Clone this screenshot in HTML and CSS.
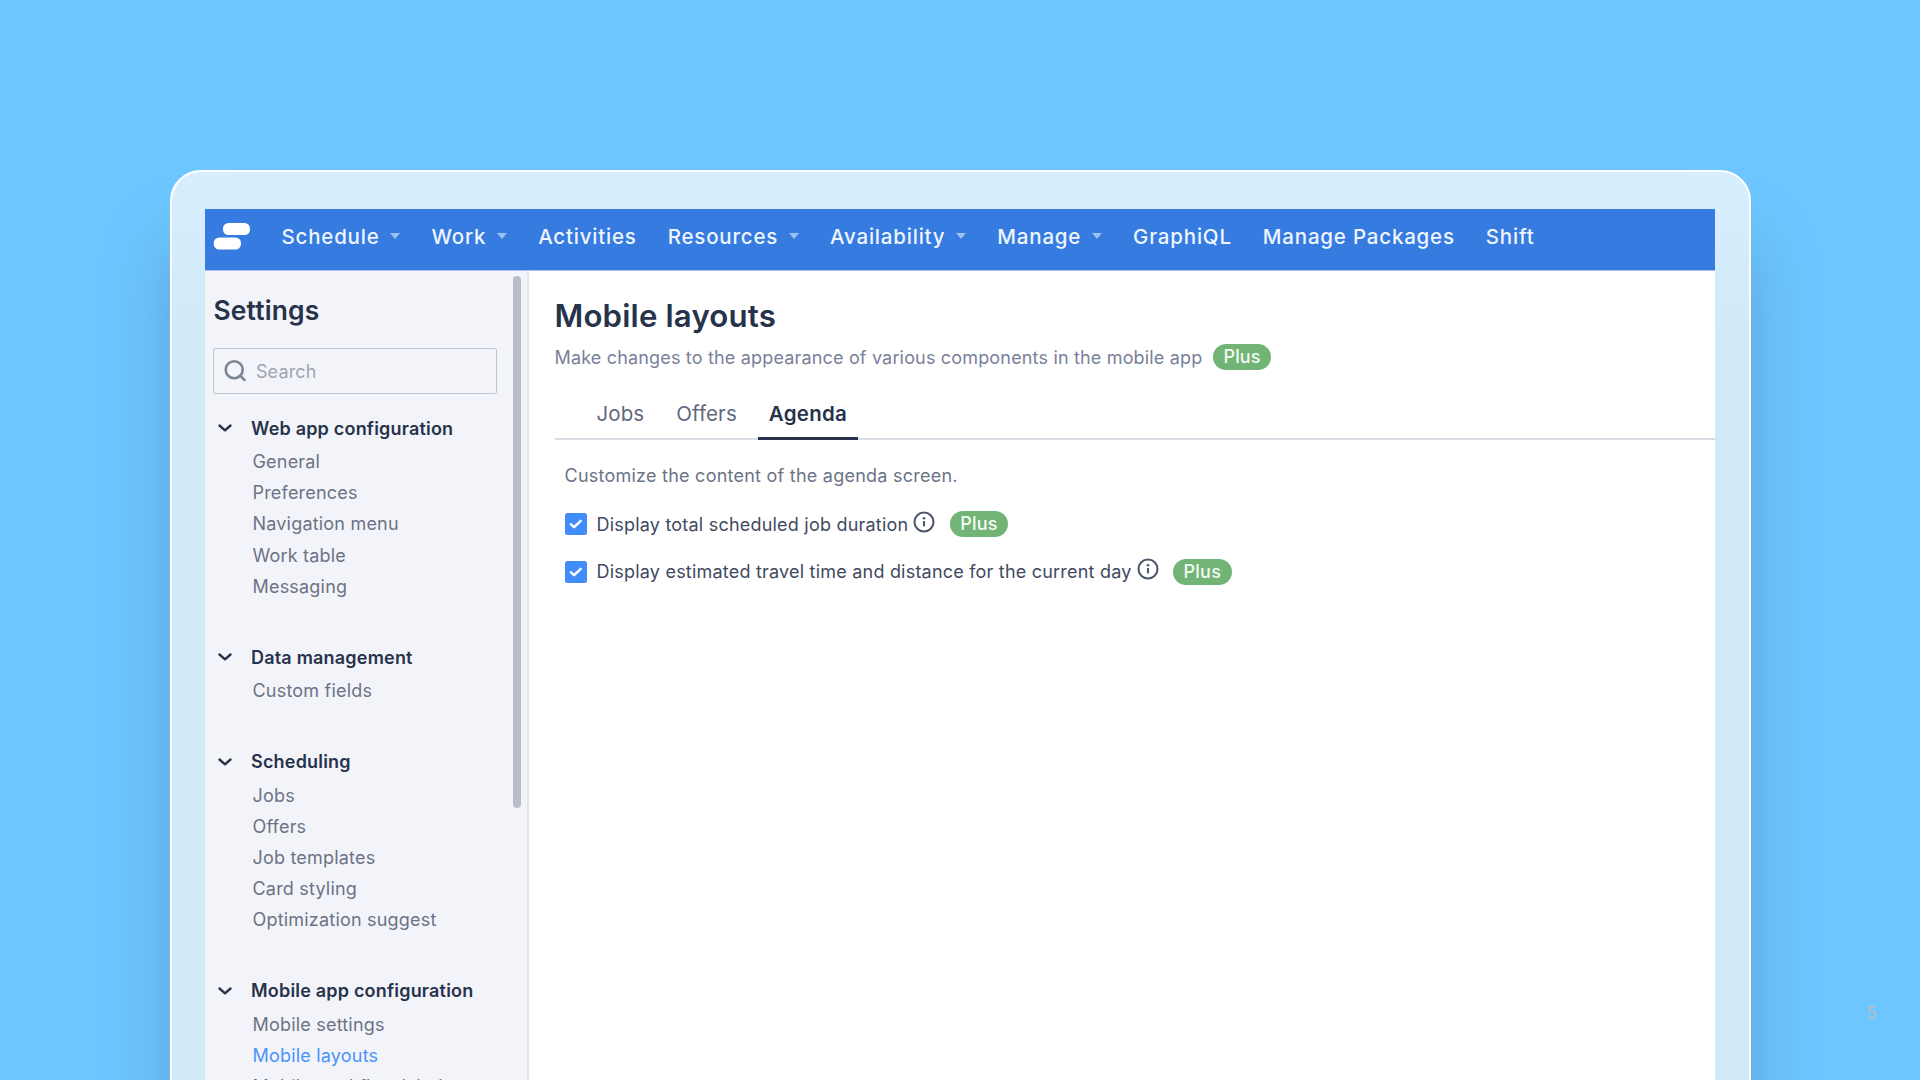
FILE: index.html
```
<!DOCTYPE html>
<html>
<head>
    <meta charset="utf-8">
    <title>Mobile layouts</title>
    <link rel="stylesheet" href="styles.css">
</head>
<body>
    <div class="slide">
        <div class="frame">
            <div class="screen">
                <div class="navbar">
                    <svg class="logo" width="38" height="28" viewBox="0 0 38 28">
                        <rect x="10" y="1" width="27" height="12" rx="5.5" fill="#fff"/>
                        <rect x="0.7" y="15.5" width="27.3" height="12" rx="5.5" fill="#fff"/>
                    </svg>
                    <div class="nav-links">
                        <a class="nav-link">Schedule<span class="caret"></span></a>
                        <a class="nav-link">Work<span class="caret"></span></a>
                        <a class="nav-link">Activities</a>
                        <a class="nav-link">Resources<span class="caret"></span></a>
                        <a class="nav-link">Availability<span class="caret"></span></a>
                        <a class="nav-link">Manage<span class="caret"></span></a>
                        <a class="nav-link">GraphiQL</a>
                        <a class="nav-link">Manage Packages</a>
                        <a class="nav-link">Shift</a>
                    </div>
                </div>

                <div class="content">
                    <div class="sidebar">
                        <div class="sidebar-inner">
                            <h2>Settings</h2>
                            <div class="search">
                                <svg width="24" height="24" viewBox="0 0 24 24" fill="none" stroke="#7c8594" stroke-width="2.6" stroke-linecap="round">
                                    <circle cx="11.2" cy="10.7" r="8.5"/>
                                    <path d="M17.3 16.8l4.2 4.2"/>
                                </svg>
                                <span>Search</span>
                            </div>

                            <div class="group">
                                <div class="group-title"><svg class="chevron" viewBox="0 0 14 8"><path d="M1.5 1.5L7 6.3l5.5-4.8"/></svg>Web app configuration</div>
                                <a class="item">General</a>
                                <a class="item">Preferences</a>
                                <a class="item">Navigation menu</a>
                                <a class="item">Work table</a>
                                <a class="item">Messaging</a>
                            </div>
                            <div class="group">
                                <div class="group-title"><svg class="chevron" viewBox="0 0 14 8"><path d="M1.5 1.5L7 6.3l5.5-4.8"/></svg>Data management</div>
                                <a class="item">Custom fields</a>
                            </div>
                            <div class="group">
                                <div class="group-title"><svg class="chevron" viewBox="0 0 14 8"><path d="M1.5 1.5L7 6.3l5.5-4.8"/></svg>Scheduling</div>
                                <a class="item">Jobs</a>
                                <a class="item">Offers</a>
                                <a class="item">Job templates</a>
                                <a class="item">Card styling</a>
                                <a class="item">Optimization suggest</a>
                            </div>
                            <div class="group">
                                <div class="group-title"><svg class="chevron" viewBox="0 0 14 8"><path d="M1.5 1.5L7 6.3l5.5-4.8"/></svg>Mobile app configuration</div>
                                <a class="item">Mobile settings</a>
                                <a class="item active">Mobile layouts</a>
                                <a class="item">Mobile workflow labels</a>
                            </div>
                        </div>
                        <div class="scrollbar"></div>
                    </div>

                    <div class="main">
                        <h1>Mobile layouts</h1>
                        <div class="subtitle">
                            <span>Make changes to the appearance of various components in the mobile app</span>
                            <span class="badge">Plus</span>
                        </div>

                        <div class="tabs">
                            <a class="tab">Jobs</a>
                            <a class="tab">Offers</a>
                            <a class="tab active">Agenda</a>
                        </div>

                        <div class="panel">
                            <p>Customize the content of the agenda screen.</p>
                            <div class="option">
                                <svg class="checkbox" viewBox="0 0 22 22"><rect width="22" height="22" rx="2.5"/><path d="M5.8 11.2l3.2 3 6.8-6.4"/></svg>
                                <span>Display total scheduled job duration</span>
                                <svg class="info" viewBox="0 0 22 22"><circle class="ring" cx="11" cy="11" r="9.5"/><circle class="dot" cx="11" cy="7.3" r="1.3"/><path d="M11 10v5.4"/></svg>
                                <span class="badge">Plus</span>
                            </div>
                            <div class="option">
                                <svg class="checkbox" viewBox="0 0 22 22"><rect width="22" height="22" rx="2.5"/><path d="M5.8 11.2l3.2 3 6.8-6.4"/></svg>
                                <span>Display estimated travel time and distance for the current day</span>
                                <svg class="info" viewBox="0 0 22 22"><circle class="ring" cx="11" cy="11" r="9.5"/><circle class="dot" cx="11" cy="7.3" r="1.3"/><path d="M11 10v5.4"/></svg>
                                <span class="badge">Plus</span>
                            </div>
                        </div>
                    </div>
                </div>
            </div>
        </div>
        <div class="page-number">5</div>
    </div>
</body>
</html>
```
FILE: styles.css
```
body {
    margin: 0;
    font-family: Inter, "Liberation Sans", sans-serif;
    background-color: #6dc6ff;
}
.slide {
    position: relative;
    height: 1080px;
    overflow: hidden;
    box-sizing: border-box;
    padding: 169.5px 169.5px 0;
}
.frame {
    box-sizing: border-box;
    height: 1100px;
    padding: 37.5px 33.5px 0;
    border: 2px solid white;
    border-radius: 31px;
    background: linear-gradient(#d7eeff, #d2e9f8 160px);
    box-shadow: 0 72px 66px rgba(70, 120, 160, 0.42);
}
.screen {
    background-color: white;
}
.navbar {
    box-sizing: border-box;
    height: 62px;
    padding: 0 0 7px 8px;
    display: flex;
    align-items: center;
    background-color: #367bdf;
    border-bottom: 1px solid #a5c3f0;
}
.nav-links {
    display: flex;
    gap: 31px;
    margin-left: 30.5px;
}
.nav-link {
    display: flex;
    align-items: center;
    font-size: 20.5px;
    font-weight: 500;
    letter-spacing: 0.8px;
    color: #eef5ff;
}
.caret {
    margin-left: 10.9px;
    border-left: 5.5px solid transparent;
    border-right: 5.5px solid transparent;
    border-top: 6px solid #9dc1f5;
}
.content {
    display: flex;
    height: 830px;
    letter-spacing: 0.17px;
}
.sidebar {
    box-sizing: border-box;
    width: 324px;
    flex-shrink: 0;
    display: flex;
    justify-content: space-between;
    padding: 5px 6px 0 8.4px;
    background-color: #f3f4f9;
    border-right: 2px solid #e3e5eb;
}
.scrollbar {
    width: 8px;
    height: 532px;
    border-radius: 4px;
    background-color: #b8bdc9;
}
.sidebar h2 {
    margin: 17px 0 21px;
    font-size: 26.4px;
    line-height: 34px;
    font-weight: 600;
    color: #27324b;
}
.search {
    box-sizing: border-box;
    width: 284px;
    height: 46px;
    padding-left: 9px;
    display: flex;
    align-items: center;
    gap: 8.5px;
    border: 1px solid #c0c4d0;
    border-radius: 2px;
    font-size: 18px;
    color: #9ea4b1;
    margin-bottom: 16px;
}
.group {
    margin-bottom: 37.2px;
}
.group-title {
    display: flex;
    align-items: center;
    height: 36px;
    padding-left: 4.6px;
    font-size: 18px;
    font-weight: 600;
    letter-spacing: 0.2px;
    color: #27324b;
}
.chevron {
    width: 14px;
    height: 8px;
    margin-right: 19px;
    fill: none;
    stroke: #27324b;
    stroke-width: 2.4;
    stroke-linecap: round;
    stroke-linejoin: round;
}
.item {
    display: block;
    padding-left: 39.1px;
    font-size: 18px;
    line-height: 31.2px;
    letter-spacing: 0.2px;
    color: #6b7386;
}
.item.active {
    color: #4a93fb;
}
.main {
    flex: 1;
    padding: 26px 0 0 25.5px;
}
.main h1 {
    margin: 0;
    font-size: 31.2px;
    line-height: 38px;
    font-weight: 600;
    color: #27324b;
}
.subtitle {
    display: flex;
    align-items: center;
    gap: 11px;
    height: 26px;
    margin-top: 9px;
    font-size: 18px;
    color: #79809a;
}
.badge {
    box-sizing: border-box;
    height: 26px;
    padding: 0 10px;
    border-radius: 13px;
    background-color: #71b476;
    color: #f4fbf4;
    font-size: 18px;
    font-weight: 500;
    line-height: 26px;
}
.tabs {
    display: flex;
    height: 44px;
    margin-top: 24px;
    padding-left: 31px;
    border-bottom: 2px solid #dadce3;
}
.tab {
    padding: 0 11px;
    margin-right: 10px;
    height: 43px;
    font-size: 20.5px;
    line-height: 40px;
    letter-spacing: 0.1px;
    color: #5f687d;
}
.tab.active {
    font-weight: 600;
    letter-spacing: 0.25px;
    color: #27324b;
    border-bottom: 3px solid #27324b;
}
.panel {
    padding-left: 10px;
    font-size: 18px;
    letter-spacing: 0.21px;
}
.panel p {
    margin: 24px 0 23px;
    line-height: 24px;
    letter-spacing: 0.24px;
    color: #6b7386;
}
.option {
    display: flex;
    align-items: center;
    height: 26px;
    margin-bottom: 21.5px;
    color: #3f4a61;
}
.option .badge {
    padding: 0 10.5px;
}
.checkbox {
    width: 22px;
    height: 22px;
    margin-right: 10px;
}
.checkbox rect {
    fill: #408cfb;
}
.checkbox path {
    fill: none;
    stroke: white;
    stroke-width: 2.4;
    stroke-linecap: round;
    stroke-linejoin: round;
}
.info {
    width: 22px;
    height: 22px;
    margin: 0 14.5px 5px 5px;
}
.info .ring,
.info path {
    fill: none;
    stroke: #4d586e;
    stroke-width: 2.1;
}
.info .dot {
    fill: #4d586e;
}
.page-number {
    position: absolute;
    right: 43.5px;
    bottom: 56px;
    font-family: Roboto, sans-serif;
    font-size: 19px;
    color: #b7bcc6;
}
```
